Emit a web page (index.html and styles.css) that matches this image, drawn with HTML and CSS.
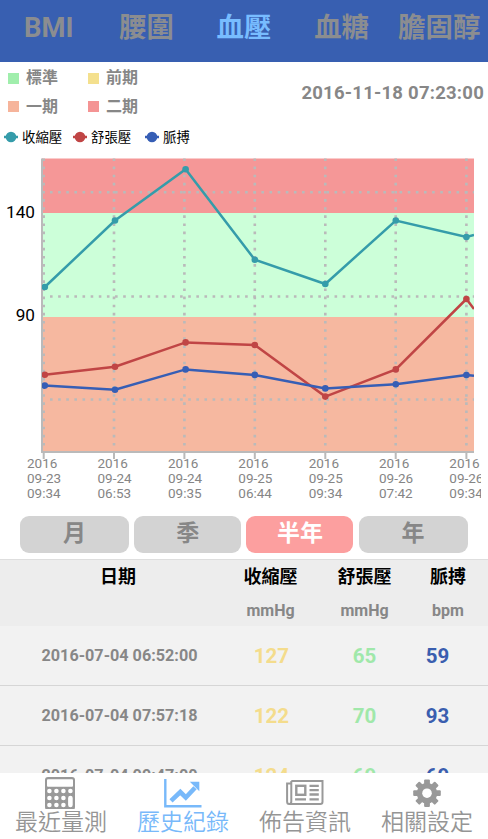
FILE: index.html
```html
<!DOCTYPE html>
<html lang="zh-Hant">
  <head>
    <meta charset="utf-8">
    <title>歷史紀錄</title>
    <link rel="stylesheet" href="styles.css">
  </head>
  <body>
    <div class="app">

      <div class="tabs">
        <div class="tab">BMI</div>
        <div class="tab">腰圍</div>
        <div class="tab active">血壓</div>
        <div class="tab">血糖</div>
        <div class="tab">膽固醇</div>
      </div>

      <div class="info">
        <div class="levels">
          <div class="level"><span class="box normal"></span>標準</div>
          <div class="level"><span class="box pre"></span>前期</div>
          <div class="level"><span class="box stage1"></span>一期</div>
          <div class="level"><span class="box stage2"></span>二期</div>
        </div>
        <div class="datetime">2016-11-18 07:23:00</div>
      </div>

      <div class="legend">
        <div class="series systolic"><svg width="14" height="12"><path d="M0 6H14"/><circle cx="7" cy="6" r="5.3"/></svg>收縮壓</div>
        <div class="series diastolic"><svg width="14" height="12"><path d="M0 6H14"/><circle cx="7" cy="6" r="5.3"/></svg>舒張壓</div>
        <div class="series pulse"><svg width="14" height="12"><path d="M0 6H14"/><circle cx="7" cy="6" r="5.3"/></svg>脈搏</div>
      </div>

      <svg class="chart" viewBox="0 150 488 355">
        <defs>
          <clipPath id="plot"><rect x="42" y="158" width="432" height="296"/></clipPath>
          <clipPath id="labels"><rect x="0" y="452" width="481" height="53"/></clipPath>
        </defs>

        <!-- level bands -->
        <rect x="42" y="158.5" width="432" height="54.5" fill="#f59797"/>
        <rect x="42" y="213" width="432" height="104" fill="#ccffd9"/>
        <rect x="42" y="317" width="432" height="135" fill="#f6b8a0"/>

        <!-- grid -->
        <path class="grid" d="M50 192.3H474M50 296.5H474M50 399.5H474"/>
        <path class="grid" d="M43.7 158.4V452M114 158.4V452M184.4 158.4V452M254.8 158.4V452M325.3 158.4V452M395.7 158.4V452M466.4 158.4V452"/>

        <!-- axis -->
        <path class="axis" d="M42 158.5V452H474"/>
        <path class="tick" d="M43.7 452V459M114 452V459M184.4 452V459M254.8 452V459M325.3 452V459M395.7 452V459M466.4 452V459"/>

        <g class="line diastolic" clip-path="url(#plot)">
          <path d="M44.8 374.7L115 366.8L185.6 342.4L254.8 345L325.3 396.6L395.8 369.4L466.4 299L474 309"/>
          <circle cx="44.8" cy="374.7" r="3.3"/><circle cx="115" cy="366.8" r="3.3"/><circle cx="185.6" cy="342.4" r="3.3"/><circle cx="254.8" cy="345" r="3.3"/><circle cx="325.3" cy="396.6" r="3.3"/><circle cx="395.8" cy="369.4" r="3.3"/><circle cx="466.4" cy="299" r="3.3"/>
        </g>
        <g class="line systolic" clip-path="url(#plot)">
          <path d="M44.8 287L115 220.5L185.6 169.2L254.8 259.7L325.3 284L395.8 220.5L466.4 237L474 235"/>
          <circle cx="44.8" cy="287" r="3.3"/><circle cx="115" cy="220.5" r="3.3"/><circle cx="185.6" cy="169.2" r="3.3"/><circle cx="254.8" cy="259.7" r="3.3"/><circle cx="325.3" cy="284" r="3.3"/><circle cx="395.8" cy="220.5" r="3.3"/><circle cx="466.4" cy="237" r="3.3"/>
        </g>
        <g class="line pulse" clip-path="url(#plot)">
          <path d="M44.8 385.6L115 389.7L185.6 369.4L254.8 374.9L325.3 388.4L395.8 384.3L466.4 375L474 375.8"/>
          <circle cx="44.8" cy="385.6" r="3.3"/><circle cx="115" cy="389.7" r="3.3"/><circle cx="185.6" cy="369.4" r="3.3"/><circle cx="254.8" cy="374.9" r="3.3"/><circle cx="325.3" cy="388.4" r="3.3"/><circle cx="395.8" cy="384.3" r="3.3"/><circle cx="466.4" cy="375" r="3.3"/>
        </g>

        <text class="y-label" x="35" y="218">140</text>
        <text class="y-label" x="35" y="321">90</text>

        <g class="x-label" clip-path="url(#labels)">
          <text><tspan x="27" y="468.4">2016</tspan><tspan x="27" y="483.3">09-23</tspan><tspan x="27" y="498.2">09:34</tspan></text>
          <text><tspan x="97.5" y="468.4">2016</tspan><tspan x="97.5" y="483.3">09-24</tspan><tspan x="97.5" y="498.2">06:53</tspan></text>
          <text><tspan x="168" y="468.4">2016</tspan><tspan x="168" y="483.3">09-24</tspan><tspan x="168" y="498.2">09:35</tspan></text>
          <text><tspan x="238.3" y="468.4">2016</tspan><tspan x="238.3" y="483.3">09-25</tspan><tspan x="238.3" y="498.2">06:44</tspan></text>
          <text><tspan x="308.7" y="468.4">2016</tspan><tspan x="308.7" y="483.3">09-25</tspan><tspan x="308.7" y="498.2">09:34</tspan></text>
          <text><tspan x="379" y="468.4">2016</tspan><tspan x="379" y="483.3">09-26</tspan><tspan x="379" y="498.2">07:42</tspan></text>
          <text><tspan x="449.3" y="468.4">2016</tspan><tspan x="449.3" y="483.3">09-26</tspan><tspan x="449.3" y="498.2">09:34</tspan></text>
        </g>
      </svg>

      <div class="ranges">
        <div class="range">月</div>
        <div class="range">季</div>
        <div class="range selected">半年</div>
        <div class="range">年</div>
      </div>

      <div class="table">
        <div class="row head">
          <div>日期</div>
          <div>收縮壓<span>mmHg</span></div>
          <div>舒張壓<span>mmHg</span></div>
          <div>脈搏<span>bpm</span></div>
        </div>
        <div class="row">
          <div class="date">2016-07-04 06:52:00</div>
          <div class="val yellow">127</div>
          <div class="val green">65</div>
          <div class="val blue">59</div>
        </div>
        <div class="row">
          <div class="date">2016-07-04 07:57:18</div>
          <div class="val yellow">122</div>
          <div class="val green">70</div>
          <div class="val blue">93</div>
        </div>
        <div class="row">
          <div class="date">2016-07-04 09:47:00</div>
          <div class="val yellow">124</div>
          <div class="val green">69</div>
          <div class="val blue">69</div>
        </div>
      </div>

      <div class="nav">
        <div class="nav-item">
          <svg width="40" height="36" viewBox="0 0 40 36">
            <rect x="4" y="4" width="30" height="33" rx="3" fill="#999"/>
            <g fill="#fff">
              <rect x="6" y="6.3" width="26" height="7.5" rx="1"/>
              <circle cx="8.4" cy="18" r="2.3"/><circle cx="15.4" cy="18" r="2.3"/><circle cx="22.4" cy="18" r="2.3"/><circle cx="29.4" cy="18" r="2.3"/>
              <circle cx="8.4" cy="25" r="2.3"/><circle cx="15.4" cy="25" r="2.3"/><circle cx="22.4" cy="25" r="2.3"/>
              <circle cx="8.4" cy="32" r="2.3"/><circle cx="15.4" cy="32" r="2.3"/><circle cx="22.4" cy="32" r="2.3"/>
              <rect x="27.1" y="22.7" width="4.6" height="11.6" rx="2.3"/>
            </g>
          </svg>
          最近量測
        </div>
        <div class="nav-item active">
          <svg width="40" height="36" viewBox="0 0 40 36">
            <path d="M2.3 6V33.2H38.5" fill="none" stroke="#78b9fa" stroke-width="2.4"/>
            <path d="M8 27.8L17.3 19L22.8 24.5L32 14.7" fill="none" stroke="#78b9fa" stroke-width="4.6"/>
            <path d="M26.8 8.8H36.3V18.3Z" fill="#78b9fa"/>
          </svg>
          歷史紀錄
        </div>
        <div class="nav-item">
          <svg width="40" height="36" viewBox="0 0 40 36" fill="none" stroke="#999" stroke-width="2">
            <path d="M6.3 8V28.5Q6.3 31 4.1 31Q2.1 31 2.1 28.5V10.5H6.3"/>
            <path d="M6.3 8H37.5V28.8Q37.5 31 35.3 31H4.1"/>
            <rect x="11.3" y="12.8" width="9" height="9" stroke-width="2.4"/>
            <path d="M24.5 12.8H33.8M24.5 17.1H33.8M24.5 21.5H33.8M10.1 26.3H21M24.5 26.3H33.8" stroke-width="2.3"/>
          </svg>
          佈告資訊
        </div>
        <div class="nav-item">
          <svg width="40" height="36" viewBox="0 0 40 36">
            <g transform="translate(20 20.2)">
              <g fill="#999">
                <rect x="-2.9" y="-13.8" width="5.8" height="27.6" rx="1"/>
                <rect x="-2.9" y="-13.8" width="5.8" height="27.6" rx="1" transform="rotate(45)"/>
                <rect x="-2.9" y="-13.8" width="5.8" height="27.6" rx="1" transform="rotate(90)"/>
                <rect x="-2.9" y="-13.8" width="5.8" height="27.6" rx="1" transform="rotate(135)"/>
                <circle r="10.3"/>
              </g>
              <circle r="4.8" fill="#fff"/>
            </g>
          </svg>
          相關設定
        </div>
      </div>

    </div>
  </body>
</html>
```
FILE: styles.css
```css
* {
  box-sizing: border-box;
}

body {
  margin: 0;
  background: #fff;
  font-family: Roboto, "Noto Sans CJK TC", sans-serif;
  color: #878787;
}

.app {
  width: 488px;
  height: 839px;
  overflow: hidden;
  display: flex;
  flex-direction: column;
}

.tabs {
  display: grid;
  grid-template-columns: repeat(5, 1fr);
  flex: none;
  height: 62px;
  background: #385fb1;
}

.tab {
  font-size: 27.4px;
  line-height: 57px;
  font-weight: bold;
  text-align: center;
  white-space: nowrap;
  color: #8b8d90;
}

.tab.active {
  color: #78bcff;
}

.info {
  display: flex;
  justify-content: space-between;
  flex: none;
  height: 61px;
  padding: 2px 4px 0 8px;
}

.levels {
  display: grid;
  grid-template-columns: 80px 80px;
  grid-template-rows: 28.5px 28.5px;
}

.level {
  display: flex;
  align-items: center;
  gap: 7px;
  font-size: 16px;
  line-height: 28px;
  font-weight: bold;
}

.box {
  width: 11px;
  height: 11px;
}

.normal {
  background: #a0eeac;
}

.pre {
  background: #f4e08e;
}

.stage1 {
  background: #f6b49b;
}

.stage2 {
  background: #f49494;
}

.datetime {
  font-size: 18.5px;
  line-height: 58px;
  font-weight: bold;
  letter-spacing: 0.23px;
}

.legend {
  display: flex;
  flex: none;
  height: 27px;
  padding-left: 4px;
}

.series {
  display: flex;
  align-items: center;
  gap: 4px;
  height: 26px;
  font-size: 13.4px;
  color: #000;
}

.series.systolic {
  width: 69px;
}

.series.diastolic {
  width: 72px;
}

.systolic {
  --line: #359caa;
}

.diastolic {
  --line: #c04545;
}

.pulse {
  --line: #365eb5;
}

.series svg {
  fill: var(--line);
  stroke: var(--line);
  stroke-width: 2.5;
  margin-top: 2px;
}

.series circle {
  stroke: none;
}

.chart {
  flex: none;
  width: 488px;
  height: 355px;
}

.grid {
  fill: none;
  stroke: #bababa;
  stroke-width: 2.6;
  stroke-dasharray: 2.6 5.53;
}

.axis {
  fill: none;
  stroke: #bababa;
  stroke-width: 2;
}

.tick {
  stroke: #bababa;
  stroke-width: 2;
}

.line path {
  fill: none;
  stroke: var(--line);
  stroke-width: 2.5;
}

.line circle {
  fill: var(--line);
}

.y-label {
  font-size: 17.2px;
  text-anchor: end;
  fill: #000;
}

.x-label {
  font-size: 13.5px;
  fill: #858585;
}

.ranges {
  display: grid;
  grid-template-columns: 109px 107px 107px 109px;
  column-gap: 5.2px;
  flex: none;
  height: 54px;
  padding: 11px 0 0 20px;
}

.range {
  height: 37px;
  border-radius: 9px;
  background: #d3d3d3;
  font-size: 23px;
  line-height: 35px;
  font-weight: bold;
  text-align: center;
}

.range.selected {
  background: #fc9f9f;
  color: #fff;
}

.table {
  flex: none;
  height: 214px;
  overflow: hidden;
  border-top: 1px solid #dedede;
}

.row {
  display: grid;
  grid-template-columns: 222px 97px 91px 76px;
  height: 60px;
  border-bottom: 1px solid #d6d6d6;
  background: #f2f2f2;
  text-align: center;
  font-weight: bold;
  line-height: 60px;
}

.row.head {
  height: 66px;
  border: 0;
  background: #ededed;
  color: #000;
  font-size: 18px;
  line-height: 34px;
}

.head div:first-child {
  padding-left: 14px;
}

.head span {
  display: block;
  font-size: 16px;
  line-height: 33px;
  color: #878787;
}

.date {
  padding-left: 17px;
  font-size: 16.2px;
}

.val {
  font-size: 20.5px;
}

.val.yellow {
  padding-left: 2px;
  color: #f4dc8c;
}

.green {
  color: #a0e8aa;
}

.val.blue {
  padding-right: 21px;
  color: #3a5eaf;
}

.nav {
  display: grid;
  grid-template-columns: repeat(4, 1fr);
  flex: 1;
  background: #fff;
}

.nav-item {
  display: flex;
  flex-direction: column;
  align-items: center;
  font-size: 23px;
  line-height: 28px;
  font-weight: 350;
  color: #959595;
}

.nav-item.active {
  color: #78b9fa;
}
```
